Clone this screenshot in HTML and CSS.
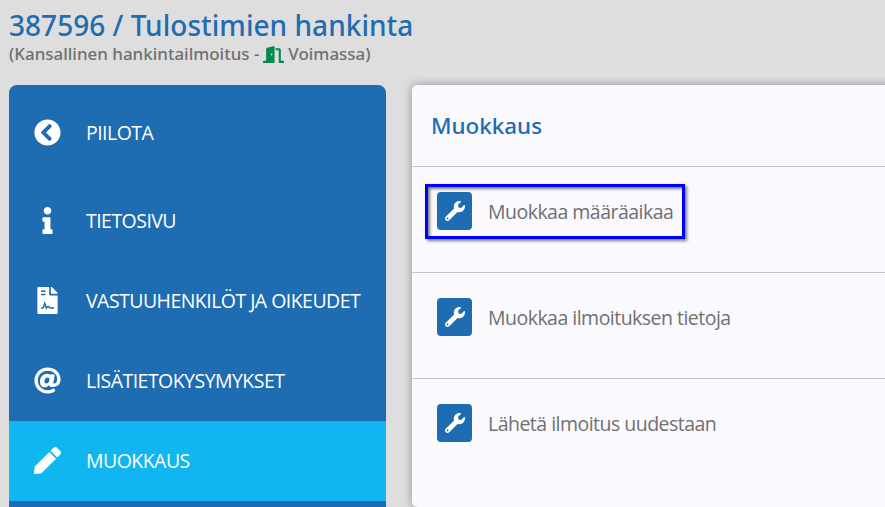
FILE: index.html
```html
<!DOCTYPE html>
<html lang="fi">
<head>
    <meta charset="UTF-8">
    <meta name="viewport" content="width=device-width, initial-scale=1.0">
    <title>Tulostimien hankinta</title>
    <link rel="stylesheet" href="styles.css">
</head>
<body>

    <!-- Shared icons -->
    <svg class="icon-defs">
        <symbol id="wrench" viewBox="0 0 512 512">
            <path d="M507.73 109.1c-2.24-9.03-13.54-12.09-20.12-5.51l-74.36 74.36-67.88-11.31-11.31-67.88 74.36-74.36c6.62-6.62 3.43-17.9-5.66-20.16-47.38-11.74-99.55.91-136.58 37.93-39.64 39.64-50.55 97.1-34.05 147.2L18.74 402.76c-24.99 24.99-24.99 65.51 0 90.5 24.99 24.99 65.51 24.99 90.5 0l213.21-213.21c50.12 16.71 107.47 5.68 147.37-34.22 37.07-37.07 49.7-89.32 37.91-136.73zM64 472c-13.25 0-24-10.75-24-24 0-13.26 10.75-24 24-24s24 10.74 24 24c0 13.25-10.75 24-24 24z"/>
        </symbol>
    </svg>

    <header class="page-header">
        <h1>387596 / Tulostimien hankinta</h1>
        <div class="subtitle">
            <span>(Kansallinen hankintailmoitus -</span>
            <svg class="door" viewBox="0 0 640 512"><path d="M624 448h-80V113.45C544 86.19 522.47 64 496 64H384v64h96v384h144c8.84 0 16-7.16 16-16v-32c0-8.84-7.16-16-16-16zM312.24 1.01l-192 49.74C105.99 54.44 96 67.7 96 82.92V448H16c-8.84 0-16 7.16-16 16v32c0 8.84 7.16 16 16 16h336V33.18c0-21.58-19.56-37.41-39.76-32.17zM264 288c-13.25 0-24-14.33-24-32s10.75-32 24-32 24 14.33 24 32-10.75 32-24 32z"/></svg>
            <span>Voimassa)</span>
        </div>
    </header>

    <div class="layout">
        <nav class="sidebar">
            <a class="nav-item toggle">
                <svg viewBox="0 0 512 512"><path d="M256 504C119 504 8 393 8 256S119 8 256 8s248 111 248 248-111 248-248 248zM142.1 273l135.5 135.5c9.4 9.4 24.6 9.4 33.9 0l17-17c9.4-9.4 9.4-24.6 0-33.9L226.9 256l101.6-101.6c9.4-9.4 9.4-24.6 0-33.9l-17-17c-9.4-9.4-24.6-9.4-33.9 0L142.1 239c-9.4 9.4-9.4 24.6 0 34z"/></svg>
                <span>PIILOTA</span>
            </a>
            <a class="nav-item">
                <svg viewBox="0 0 192 512"><path d="M20 424.229h20V279.771H20c-11.046 0-20-8.954-20-20V212c0-11.046 8.954-20 20-20h112c11.046 0 20 8.954 20 20v212.229h20c11.046 0 20 8.954 20 20V492c0 11.046-8.954 20-20 20H20c-11.046 0-20-8.954-20-20v-47.771c0-11.046 8.954-20 20-20zM96 0C56.235 0 24 32.235 24 72s32.235 72 72 72 72-32.235 72-72S135.764 0 96 0z"/></svg>
                <span>TIETOSIVU</span>
            </a>
            <a class="nav-item">
                <svg viewBox="0 0 384 512">
                    <path d="M224 136V0H24C10.7 0 0 10.7 0 24v464c0 13.3 10.7 24 24 24h336c13.3 0 24-10.7 24-24V160H248c-13.200 0-24-10.800-24-24zM384 121.900v6.100H256V0h6.100c6.400 0 12.500 2.500 17 7l97.900 98c4.500 4.500 7 10.600 7 16.900z"/>
                    <path class="lines" d="M68 80h88M68 144h88M68 400h30c10 0 14-6 17-15l25-75 30 92 22-27c12-12 22-3 31 10 8 11 18 15 32 15h61"/>
                </svg>
                <span>VASTUUHENKILÖT JA OIKEUDET</span>
            </a>
            <a class="nav-item">
                <svg viewBox="0 0 512 512"><path d="M256 8C118.941 8 8 118.919 8 256c0 137.059 110.919 248 248 248 48.154 0 95.342-14.14 135.408-40.223 12.005-7.815 14.625-24.288 5.552-35.372l-10.177-12.433c-7.671-9.371-21.179-11.667-31.373-5.129C325.92 429.757 291.314 440 256 440c-101.458 0-184-82.542-184-184S154.542 72 256 72c100.139 0 184 57.619 184 160 0 38.786-21.093 79.742-58.17 83.693-17.349-.454-16.91-12.857-13.476-30.024l23.433-121.11C394.653 149.75 383.308 136 368.225 136h-44.981a13.518 13.518 0 0 0-13.432 11.993l-.01.092c-14.697-17.901-40.448-21.775-59.971-21.775-74.58 0-137.831 62.234-137.831 151.46 0 65.303 36.785 105.87 96 105.87 26.984 0 57.369-15.637 74.991-38.333 9.522 34.104 40.613 34.103 70.71 34.103C462.609 379.41 504 307.798 504 232 504 95.653 394.023 8 256 8zm-21.68 304.43c-22.249 0-36.07-15.623-36.07-40.771 0-44.993 30.779-72.729 58.63-72.729 22.292 0 35.601 15.241 35.601 40.77 0 45.061-33.875 72.73-58.161 72.73z"/></svg>
                <span>LISÄTIETOKYSYMYKSET</span>
            </a>
            <a class="nav-item active">
                <svg viewBox="0 0 512 512"><path d="M290.74 93.24l128.02 128.02-277.99 277.99-114.14 12.6C11.35 513.54-1.56 500.62.14 485.34l12.7-114.22 277.9-277.88zm207.2-19.06l-60.11-60.11c-18.75-18.75-49.16-18.75-67.91 0l-56.55 56.55 128.02 128.02 56.55-56.55c18.75-18.76 18.75-49.16 0-67.91z"/></svg>
                <span>MUOKKAUS</span>
            </a>
        </nav>

        <main class="card">
            <h2>Muokkaus</h2>
            <div class="action-row">
                <div class="action highlight">
                    <button class="tool-btn"><svg><use href="#wrench"/></svg></button>
                    <span>Muokkaa määräaikaa</span>
                </div>
            </div>
            <div class="action-row">
                <div class="action">
                    <button class="tool-btn"><svg><use href="#wrench"/></svg></button>
                    <span>Muokkaa ilmoituksen tietoja</span>
                </div>
            </div>
            <div class="action-row">
                <div class="action">
                    <button class="tool-btn"><svg><use href="#wrench"/></svg></button>
                    <span>Lähetä ilmoitus uudestaan</span>
                </div>
            </div>
        </main>
    </div>

</body>
</html>
```
FILE: styles.css
```css
* {
    box-sizing: border-box;
}
body {
    margin: 0;
    height: 507px;
    overflow: hidden;
    font-family: 'Open Sans', 'Noto Sans', sans-serif;
    background: #dedede;
    color: #707070;
}
.icon-defs {
    display: none;
}
.page-header {
    height: 85px;
    padding: 6px 9px 0;
}
h1 {
    margin: 0;
    font-family: 'Noto Sans', sans-serif;
    font-size: 28px;
    font-weight: 500;
    line-height: 38px;
    letter-spacing: 0.03px;
    color: #1e6cb2;
    white-space: nowrap;
}
.subtitle {
    display: flex;
    align-items: center;
    gap: 4px;
    font-family: 'Noto Sans', sans-serif;
    font-size: 16.95px;
    font-weight: 500;
    line-height: 20px;
    white-space: nowrap;
}
.door {
    width: 21px;
    height: 17px;
    fill: #048a4f;
}
.layout {
    display: flex;
    gap: 26px;
    padding-left: 9px;
}
.sidebar {
    flex: none;
    width: 377px;
    height: 422px;
    background: #1e6cb2;
    border-radius: 8px 8px 0 0;
}
.nav-item {
    display: flex;
    align-items: center;
    gap: 25px;
    height: 80px;
    padding: 0 0 2px 25px;
    font-size: 19.5px;
    letter-spacing: -0.54px;
    color: #fff;
    white-space: nowrap;
}
.nav-item.toggle {
    height: 96px;
}
.nav-item.active {
    background: #10b6ef;
}
.nav-item svg {
    width: 27px;
    height: 27px;
    fill: #fff;
}
.nav-item .lines {
    fill: none;
    stroke: #1e6cb2;
    stroke-width: 28;
}
.card {
    flex: none;
    width: 490px;
    height: 422px;
    background: #faf9fe;
    border-radius: 5px;
    box-shadow: 0 0 10px rgba(0, 0, 0, 0.35);
}
h2 {
    margin: 0;
    height: 81px;
    padding-left: 19px;
    font-family: 'Noto Sans', sans-serif;
    font-size: 22.4px;
    font-weight: 500;
    line-height: 81px;
    color: #1e6cb2;
}
.action-row {
    height: 106px;
    padding: 17px 13px;
    border-top: 1px solid #c6c6ca;
}
.action {
    display: flex;
    align-items: center;
    gap: 16px;
    width: 260px;
    height: 55px;
    padding: 0 9px 1px;
    border: 3px solid transparent;
    font-size: 19.5px;
    letter-spacing: -0.52px;
    white-space: nowrap;
}
.action.highlight {
    border-color: #0000ff;
    box-shadow: 2px 2px 3px rgba(0, 0, 0, 0.5), inset 2px 2px 3px rgba(0, 0, 0, 0.5);
}
.tool-btn {
    display: flex;
    align-items: center;
    justify-content: center;
    flex: none;
    width: 35px;
    height: 38px;
    padding: 0;
    border: none;
    border-radius: 4px;
    background: #1e6cb2;
}
.tool-btn svg {
    width: 20px;
    height: 20px;
    fill: #fff;
}
```
